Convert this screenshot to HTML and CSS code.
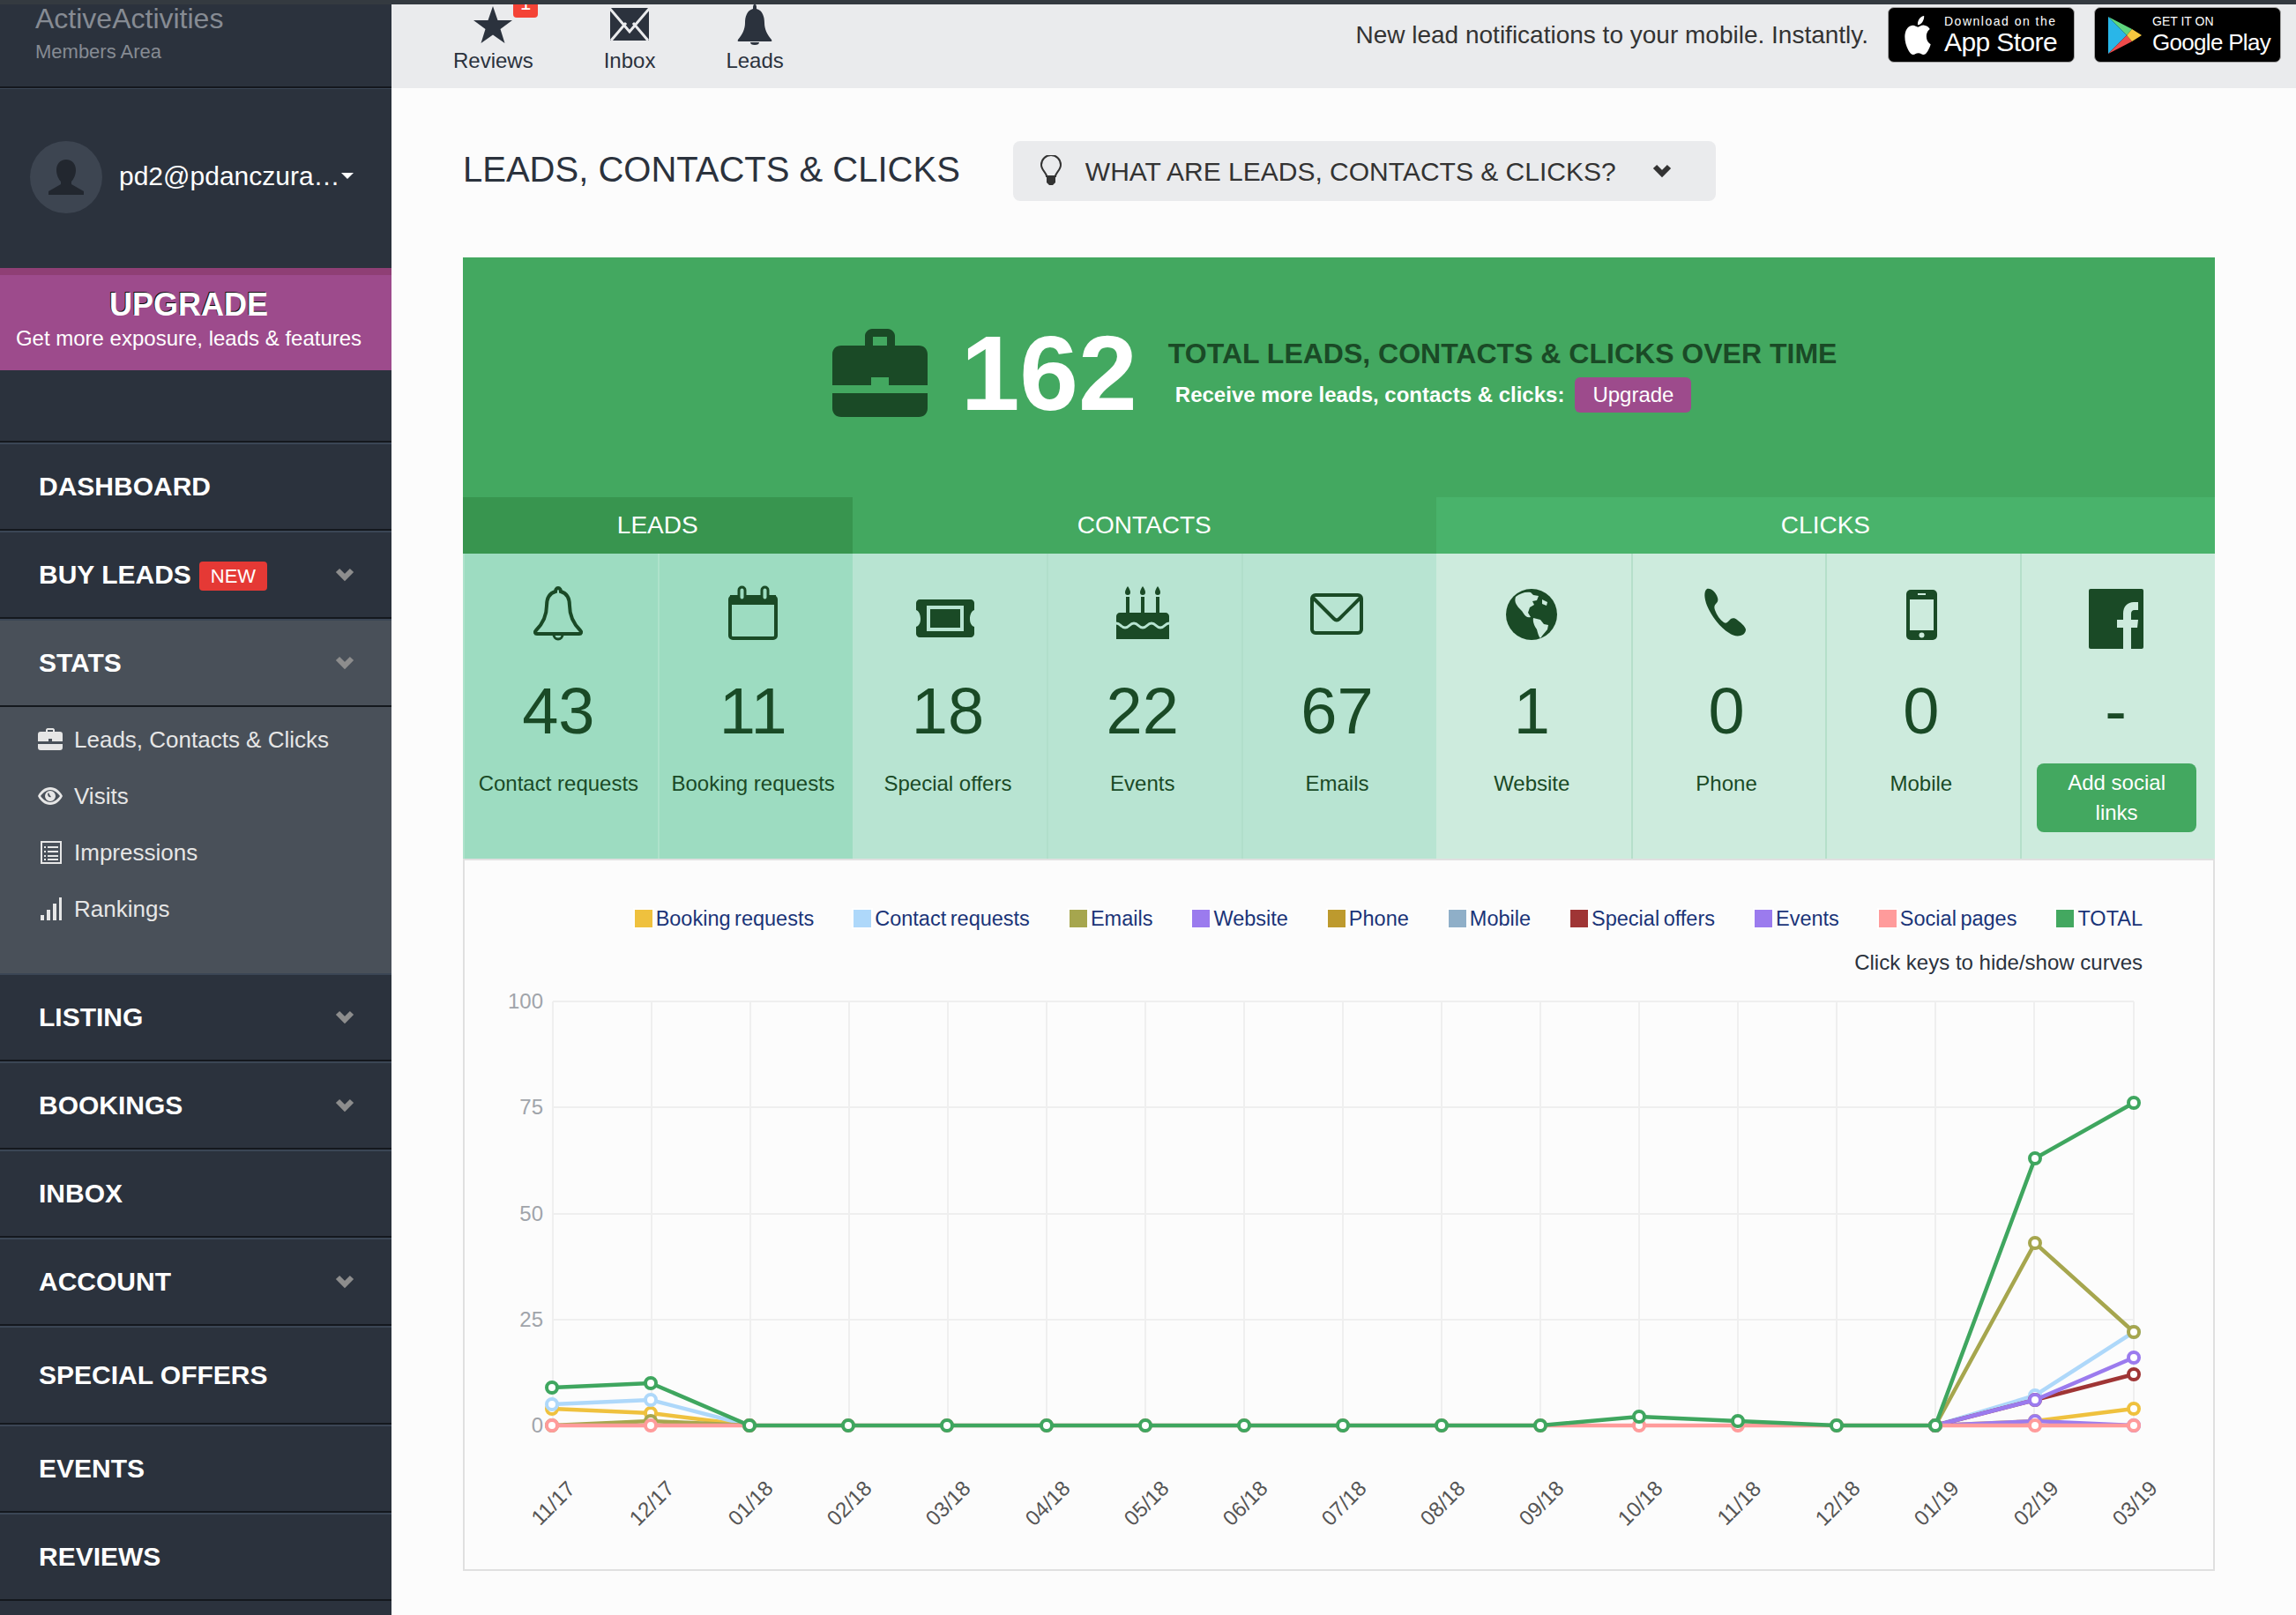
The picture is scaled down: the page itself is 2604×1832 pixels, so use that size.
FILE: index.html
```html
<!DOCTYPE html>
<html lang="en">
<head>
    <meta charset="UTF-8">
    <meta name="viewport" content="width=device-width, initial-scale=1.0">
    <title>Leads, Contacts &amp; Clicks</title>
    <link rel="stylesheet" href="styles.css">
</head>
<body>
    <div class="top-strip"></div>
    <div class="page">
        <aside class="sidebar">
            <div class="brand">
                <div class="brand-name">ActiveActivities</div>
                <div class="brand-sub">Members Area</div>
            </div>
            <div class="profile">
                <div class="avatar">
                    <svg width="40" height="40" viewBox="0 0 40 40"><path d="M20 0c7 0 11 5 11 12 0 6-3 11-5 13v3l14 8v4H0v-4l14-8v-3c-2-2-5-7-5-13C9 5 13 0 20 0z"/></svg>
                </div>
                <span class="profile-name">pd2@pdanczura…</span>
                <span class="caret"></span>
            </div>
            <div class="upgrade">
                <div class="upgrade-title">UPGRADE</div>
                <div class="upgrade-sub">Get more exposure, leads &amp; features</div>
            </div>
            <nav class="nav">
                <div class="nav-item">DASHBOARD</div>
                <div class="nav-item">
                    <span>BUY LEADS</span><span class="new-badge">NEW</span>
                    <svg class="chevron" width="22" height="16" viewBox="0 0 22 16"><path d="M3 3l8 8 8-8"/></svg>
                </div>
                <div class="nav-item nav-item-open">
                    <span>STATS</span>
                    <svg class="chevron" width="22" height="16" viewBox="0 0 22 16"><path d="M3 3l8 8 8-8"/></svg>
                </div>
                <div class="subnav">
                    <div class="subnav-item">
                        <svg width="28" height="28" viewBox="0 0 28 28"><path d="M9 5V3c0-1 1-2 2-2h6c1 0 2 1 2 2v2h6c2 0 3 1 3 3v8H16v-3h-4v3H0V8c0-2 1-3 3-3h6zm2 0h6V3h-6v2zM0 19h28v4c0 2-1 3-3 3H3c-2 0-3-1-3-3v-4z"/></svg>
                        <span>Leads, Contacts &amp; Clicks</span>
                    </div>
                    <div class="subnav-item">
                        <svg width="28" height="28" viewBox="0 0 28 28"><path fill-rule="evenodd" d="M14 4c6 0 11 4 14 10-3 6-8 10-14 10S3 20 0 14C3 8 8 4 14 4zm0 3c-4 0-8 3-11 7 3 4 7 7 11 7s8-3 11-7c-3-4-7-7-11-7zm0 1a6 6 0 1 1 0 12 6 6 0 0 1 0-12zm-2 2a3 3 0 0 0 3 5c-1-1-2-3-3-5z"/></svg>
                        <span>Visits</span>
                    </div>
                    <div class="subnav-item">
                        <svg width="28" height="28" viewBox="0 0 28 28"><path fill-rule="evenodd" d="M3 1h24v26H3V1zm2 2v22h20V3H5zm2 4h2v2H7V7zm4 0h12v2H11V7zM7 12h2v2H7v-2zm4 0h12v2H11v-2zM7 17h2v2H7v-2zm4 0h12v2H11v-2zM7 21h2v2H7v-2zm4 0h12v2H11v-2z"/></svg>
                        <span>Impressions</span>
                    </div>
                    <div class="subnav-item">
                        <svg width="28" height="28" viewBox="0 0 28 28"><path d="M3 21h4v6H3zM10 15h4v12h-4zM17 8h4v19h-4zM24 1h3v26h-3z"/></svg>
                        <span>Rankings</span>
                    </div>
                </div>
                <div class="nav-item">
                    <span>LISTING</span>
                    <svg class="chevron" width="22" height="16" viewBox="0 0 22 16"><path d="M3 3l8 8 8-8"/></svg>
                </div>
                <div class="nav-item">
                    <span>BOOKINGS</span>
                    <svg class="chevron" width="22" height="16" viewBox="0 0 22 16"><path d="M3 3l8 8 8-8"/></svg>
                </div>
                <div class="nav-item">INBOX</div>
                <div class="nav-item">
                    <span>ACCOUNT</span>
                    <svg class="chevron" width="22" height="16" viewBox="0 0 22 16"><path d="M3 3l8 8 8-8"/></svg>
                </div>
                <div class="nav-item nav-item-tall">SPECIAL OFFERS</div>
                <div class="nav-item">EVENTS</div>
                <div class="nav-item">REVIEWS</div>
            </nav>
        </aside>

        <main class="main">
            <header class="topbar">
                <div class="quick-link">
                    <svg width="46" height="46" viewBox="0 0 46 46"><path d="M23 2l5.500 16H45L31.500 28l5 16L23 34.500 9.500 44l5-16L1 18h16.500z"/></svg>
                    <span class="quick-label">Reviews</span>
                    <span class="count-badge">1</span>
                </div>
                <div class="quick-link">
                    <svg width="46" height="46" viewBox="0 0 46 46"><path d="M1 4h44v37H1z"/><path class="env-lines" d="M0 4l18 21 5 6 5-6L46 4M2 41l17-20M44 41L27 21"/></svg>
                    <span class="quick-label">Inbox</span>
                </div>
                <div class="quick-link">
                    <svg width="46" height="46" viewBox="0 0 46 46"><path d="M23 0c2 0 2 2 2 5 7 2 9 9 9 16 0 7 3 13 8 19 1 2 0 2-2 2H6c-2 0-3 0-2-2 5-6 8-12 8-19 0-7 2-14 9-16 0-3 0-5 2-5zM18 43h10a5 3 0 0 1-10 0z"/></svg>
                    <span class="quick-label">Leads</span>
                </div>
                <div class="app-links">
                    <span class="app-text">New lead notifications to your mobile. Instantly.</span>
                    <div class="store-badge">
                        <svg width="36" height="44" viewBox="0 0 24 24" preserveAspectRatio="none"><path fill="#fff" d="M12.152 6.896c-.948 0-2.415-1.078-3.960-1.040-2.040.027-3.910 1.183-4.961 3.014-2.117 3.675-.546 9.103 1.519 12.090 1.013 1.454 2.208 3.090 3.792 3.039 1.520-.065 2.090-.987 3.935-.987 1.831 0 2.350.987 3.960.948 1.637-.026 2.676-1.480 3.676-2.948 1.156-1.688 1.636-3.325 1.662-3.415-.039-.013-3.182-1.221-3.220-4.857-.026-3.040 2.480-4.494 2.597-4.559-1.429-2.090-3.623-2.324-4.390-2.376-2-.156-3.675 1.090-4.610 1.090zM15.530 3.830c.843-1.012 1.400-2.427 1.245-3.830-1.207.052-2.662.805-3.532 1.818-.780.896-1.454 2.338-1.273 3.714 1.338.104 2.715-.688 3.559-1.701"/></svg>
                        <div class="store-text">
                            <span class="store-small">Download on the</span>
                            <span class="store-big">App Store</span>
                        </div>
                    </div>
                    <div class="store-badge">
                        <svg width="38" height="42" viewBox="0 0 38 42"><path fill="#5fd67e" d="M0 0l21 21L27 14z"/><path fill="#29b6e8" d="M0 0v42l21-21z"/><path fill="#ee4b4b" d="M0 42l27-14-6-7z"/><path fill="#f6c83f" d="M27 14l11 7-11 7-6-7z"/></svg>
                        <div class="store-text">
                            <span class="store-small store-small-play">GET IT ON</span>
                            <span class="store-big store-big-play">Google Play</span>
                        </div>
                    </div>
                </div>
            </header>

            <div class="content">
                <div class="title-row">
                    <h1 class="page-title">LEADS, CONTACTS &amp; CLICKS</h1>
                    <div class="help-toggle">
                        <svg width="26" height="36" viewBox="0 0 26 36"><path class="bulb" d="M8 24c0-4-6-7-6-13a11 11 0 0 1 22 0c0 6-6 9-6 13z"/><path d="M8 25h10v6l-3 3h-4l-3-3z"/></svg>
                        <span class="help-text">WHAT ARE LEADS, CONTACTS &amp; CLICKS?</span>
                        <svg class="help-chevron" width="22" height="16" viewBox="0 0 22 16"><path d="M3 3l8 8 8-8"/></svg>
                    </div>
                </div>

                <section class="totals">
                    <svg class="totals-icon" width="108" height="100" viewBox="0 0 108 100"><path fill-rule="evenodd" d="M37 19V8c0-4 4-8 8-8h18c4 0 8 4 8 8v11h27c6 0 10 4 10 10v35H64V55H44v9H0V29c0-6 4-10 10-10h27zm9 0h16V9H46v10zM0 73h108v17c0 6-4 10-10 10H10c-6 0-10-4-10-10V73z"/></svg>
                    <div class="totals-number">162</div>
                    <div class="totals-text">
                        <div class="totals-title">TOTAL LEADS, CONTACTS &amp; CLICKS OVER TIME</div>
                        <div class="totals-line">
                            <span>Receive more leads, contacts &amp; clicks:</span>
                            <span class="upgrade-btn">Upgrade</span>
                        </div>
                    </div>
                </section>

                <section class="stats">
                    <div class="stats-head stats-head-leads">LEADS</div>
                    <div class="stats-head stats-head-contacts">CONTACTS</div>
                    <div class="stats-head stats-head-clicks">CLICKS</div>

                    <div class="stat stat-leads">
                        <svg class="stat-icon" viewBox="0 0 72 72"><path class="outline" d="M36 3c2 0 3 2 3 4 7 2 10 8 10 16 0 12 4 20 12 28 2 2 1 4-1 4H12c-2 0-3-2-1-4 8-8 12-16 12-28 0-8 3-14 10-16 0-2 1-4 3-4z"/><path class="outline-thin" d="M31 56a5 5 0 0 0 10 0"/></svg>
                        <div class="stat-value">43</div>
                        <div class="stat-label">Contact requests</div>
                    </div>
                    <div class="stat stat-leads">
                        <svg class="stat-icon" viewBox="0 0 72 72"><rect class="outline" x="10" y="13" width="52" height="47" rx="3"/><path d="M10 11h52v11H10z"/><rect class="ring" x="20" y="2" width="7" height="15" rx="3.500"/><rect class="ring" x="46" y="2" width="7" height="15" rx="3.500"/></svg>
                        <div class="stat-value">11</div>
                        <div class="stat-label">Booking requests</div>
                    </div>
                    <div class="stat stat-contacts">
                        <svg class="stat-icon" viewBox="0 0 72 72"><path d="M4 16h58c2 0 4 2 4 4v8c-3 1-5 5-5 10s2 8 5 9v8c0 2-2 4-4 4H4c-2 0-4-2-4-4v-8c3-1 5-4 5-9s-2-9-5-10v-8c0-2 2-4 4-4z"/><path class="cut" d="M12 23h42v29H12z"/><path d="M16 27h34v21H16z"/></svg>
                        <div class="stat-value">18</div>
                        <div class="stat-label">Special offers</div>
                    </div>
                    <div class="stat stat-contacts">
                        <svg class="stat-icon" viewBox="0 0 72 72"><path d="M19 1c2 3 3 5 3 7s-1 3-3 3-3-1-3-3 1-4 3-7zM36 1c2 3 3 5 3 7s-1 3-3 3-3-1-3-3 1-4 3-7zM53 1c2 3 3 5 3 7s-1 3-3 3-3-1-3-3 1-4 3-7zM17 13h4v18h-4zM34 13h4v18h-4zM51 13h4v18h-4zM10 31h52c2 0 4 2 4 4v26H6V35c0-2 2-4 4-4z"/><path class="cake-wave" d="M6 43c5 0 5 5 10 5s5-5 10-5 5 5 10 5 5-5 10-5 5 5 10 5 5-5 10-5"/></svg>
                        <div class="stat-value">22</div>
                        <div class="stat-label">Events</div>
                    </div>
                    <div class="stat stat-contacts">
                        <svg class="stat-icon" viewBox="0 0 72 72"><rect class="outline" x="8" y="11" width="56" height="43" rx="4"/><path class="outline" d="M9 14l24 24c2 2 4 2 6 0l24-24"/></svg>
                        <div class="stat-value">67</div>
                        <div class="stat-label">Emails</div>
                    </div>
                    <div class="stat stat-clicks">
                        <svg class="stat-icon" viewBox="0 0 72 72"><circle cx="36" cy="33" r="29"/><path class="land" d="M18 13c5-4 11-6 17-5l3 3 6 1-2 5-5 1 2 4-5 3-2 6 3 5c-4 1-6-1-8-4-2-4-6-6-8-10-2-3-2-6-1-9zM38 37l8 2 4 5 5 1-1 5-5 6-3 4c-2-2-3-6-4-10-2-3-5-8-4-13zM48 16l6 3-1 4-5-2z"/></svg>
                        <div class="stat-value">1</div>
                        <div class="stat-label">Website</div>
                    </div>
                    <div class="stat stat-clicks">
                        <svg class="stat-icon" viewBox="0 0 72 72"><path d="M14 4c5-1 10 4 12 10 1 3 0 5-2 7-2 2-2 4-1 7 2 6 6 11 10 14 2 1 3 1 5-1l3-3c2-1 5-1 7 1 4 3 9 7 10 11 0 3-2 6-6 7-4 1-9 0-13-3-10-6-20-19-25-31C11 15 10 7 14 4z"/></svg>
                        <div class="stat-value">0</div>
                        <div class="stat-label">Phone</div>
                    </div>
                    <div class="stat stat-clicks">
                        <svg class="stat-icon" viewBox="0 0 72 72"><rect x="19" y="5" width="35" height="57" rx="5"/><rect class="cut" x="23" y="16" width="27" height="35"/><circle class="cut" cx="36.500" cy="56.500" r="3"/><path class="cut" d="M32 9h9v2h-9z"/></svg>
                        <div class="stat-value">0</div>
                        <div class="stat-label">Mobile</div>
                    </div>
                    <div class="stat stat-clicks">
                        <svg class="stat-icon" viewBox="0 0 72 72"><rect x="5" y="4" width="62" height="68" rx="2"/><path class="cut" d="M44 72V48h-7v-9h7v-7c0-8 5-13 12-13h5v9h-4c-3 0-4 2-4 4v7h8l-1 9h-7v24z"/></svg>
                        <div class="stat-value">-</div>
                        <div class="stat-button">Add social links</div>
                    </div>
                </section>

                <section class="chart-panel">
                    <div class="legend">
                        <span class="legend-item"><i class="key key-booking"></i>Booking requests</span>
                        <span class="legend-item"><i class="key key-contact"></i>Contact requests</span>
                        <span class="legend-item"><i class="key key-emails"></i>Emails</span>
                        <span class="legend-item"><i class="key key-website"></i>Website</span>
                        <span class="legend-item"><i class="key key-phone"></i>Phone</span>
                        <span class="legend-item"><i class="key key-mobile"></i>Mobile</span>
                        <span class="legend-item"><i class="key key-special"></i>Special offers</span>
                        <span class="legend-item"><i class="key key-website"></i>Events</span>
                        <span class="legend-item"><i class="key key-social"></i>Social pages</span>
                        <span class="legend-item"><i class="key key-total"></i>TOTAL</span>
                    </div>
                    <div class="legend-note">Click keys to hide/show curves</div>

                    <!-- viewBox uses the same numbers as the page so the plot is easy to read off -->
                    <svg class="chart" width="1983" height="664" viewBox="527 1116 1983 664">
                        <defs>
                            <marker id="dot-booking" markerWidth="18" markerHeight="18" refX="9" refY="9" markerUnits="userSpaceOnUse"><circle cx="9" cy="9" r="6" fill="#fff" stroke="#efc13e" stroke-width="4"/></marker>
                            <marker id="dot-contact" markerWidth="18" markerHeight="18" refX="9" refY="9" markerUnits="userSpaceOnUse"><circle cx="9" cy="9" r="6" fill="#fff" stroke="#aed8fa" stroke-width="4"/></marker>
                            <marker id="dot-emails" markerWidth="18" markerHeight="18" refX="9" refY="9" markerUnits="userSpaceOnUse"><circle cx="9" cy="9" r="6" fill="#fff" stroke="#a6a64e" stroke-width="4"/></marker>
                            <marker id="dot-purple" markerWidth="18" markerHeight="18" refX="9" refY="9" markerUnits="userSpaceOnUse"><circle cx="9" cy="9" r="6" fill="#fff" stroke="#9b7bee" stroke-width="4"/></marker>
                            <marker id="dot-special" markerWidth="18" markerHeight="18" refX="9" refY="9" markerUnits="userSpaceOnUse"><circle cx="9" cy="9" r="6" fill="#fff" stroke="#9f3535" stroke-width="4"/></marker>
                            <marker id="dot-social" markerWidth="18" markerHeight="18" refX="9" refY="9" markerUnits="userSpaceOnUse"><circle cx="9" cy="9" r="6" fill="#fff" stroke="#ff9b9b" stroke-width="4"/></marker>
                            <marker id="dot-total" markerWidth="18" markerHeight="18" refX="9" refY="9" markerUnits="userSpaceOnUse"><circle cx="9" cy="9" r="6" fill="#fff" stroke="#3fa65f" stroke-width="4"/></marker>
                        </defs>

                        <path class="grid" d="M627 1137H2420M627 1257H2420M627 1378H2420M627 1498H2420M627 1618H2420"/>
                        <path class="grid" d="M627 1137V1618M739 1137V1618M851 1137V1618M963 1137V1618M1075 1137V1618M1187 1137V1618M1299 1137V1618M1411 1137V1618M1523 1137V1618M1635 1137V1618M1747 1137V1618M1859 1137V1618M1971 1137V1618M2083 1137V1618M2195 1137V1618M2307 1137V1618M2420 1137V1618"/>

                        <g class="y-labels">
                            <text x="616" y="1145">100</text>
                            <text x="616" y="1265">75</text>
                            <text x="616" y="1386">50</text>
                            <text x="616" y="1506">25</text>
                            <text x="616" y="1626">0</text>
                        </g>
                        <g class="x-labels" transform="translate(7 2)">
                            <text transform="translate(626 1710) rotate(-45)">11/17</text>
                            <text transform="translate(738 1710) rotate(-45)">12/17</text>
                            <text transform="translate(850 1710) rotate(-45)">01/18</text>
                            <text transform="translate(962 1710) rotate(-45)">02/18</text>
                            <text transform="translate(1074 1710) rotate(-45)">03/18</text>
                            <text transform="translate(1187 1710) rotate(-45)">04/18</text>
                            <text transform="translate(1299 1710) rotate(-45)">05/18</text>
                            <text transform="translate(1411 1710) rotate(-45)">06/18</text>
                            <text transform="translate(1523 1710) rotate(-45)">07/18</text>
                            <text transform="translate(1635 1710) rotate(-45)">08/18</text>
                            <text transform="translate(1747 1710) rotate(-45)">09/18</text>
                            <text transform="translate(1859 1710) rotate(-45)">10/18</text>
                            <text transform="translate(1971 1710) rotate(-45)">11/18</text>
                            <text transform="translate(2083 1710) rotate(-45)">12/18</text>
                            <text transform="translate(2195 1710) rotate(-45)">01/19</text>
                            <text transform="translate(2308 1710) rotate(-45)">02/19</text>
                            <text transform="translate(2420 1710) rotate(-45)">03/19</text>
                        </g>

                        <g class="line line-booking" marker-start="url(#dot-booking)" marker-mid="url(#dot-booking)" marker-end="url(#dot-booking)">
                            <polyline points="626,1599 738,1604 850,1618"/>
                            <polyline points="2195,1618 2308,1613 2420,1599"/>
                        </g>
                        <g class="line line-contact" marker-start="url(#dot-contact)" marker-mid="url(#dot-contact)" marker-end="url(#dot-contact)">
                            <polyline points="626,1594 738,1589 850,1618"/>
                            <polyline points="2195,1618 2308,1584 2420,1512"/>
                        </g>
                        <g class="line line-emails" marker-start="url(#dot-emails)" marker-mid="url(#dot-emails)" marker-end="url(#dot-emails)">
                            <polyline points="626,1618 738,1613 850,1618"/>
                            <polyline points="2195,1618 2308,1411 2420,1512"/>
                        </g>
                        <g class="line line-purple" marker-start="url(#dot-purple)" marker-mid="url(#dot-purple)" marker-end="url(#dot-purple)">
                            <polyline points="2195,1618 2308,1613 2420,1618"/>
                        </g>
                        <g class="line line-special" marker-start="url(#dot-special)" marker-mid="url(#dot-special)" marker-end="url(#dot-special)">
                            <polyline points="2195,1618 2308,1589 2420,1560"/>
                        </g>
                        <g class="line line-purple" marker-start="url(#dot-purple)" marker-mid="url(#dot-purple)" marker-end="url(#dot-purple)">
                            <polyline points="2195,1618 2308,1589 2420,1541"/>
                        </g>
                        <g class="line line-social" marker-start="url(#dot-social)" marker-mid="url(#dot-social)" marker-end="url(#dot-social)">
                            <polyline points="626,1618 738,1618 850,1618 962,1618 1074,1618 1187,1618 1299,1618 1411,1618 1523,1618 1635,1618 1747,1618 1859,1618 1971,1618 2083,1618 2195,1618 2308,1618 2420,1618"/>
                        </g>
                        <g class="line line-total" marker-start="url(#dot-total)" marker-mid="url(#dot-total)" marker-end="url(#dot-total)">
                            <polyline points="626,1575 738,1570 850,1618 962,1618 1074,1618 1187,1618 1299,1618 1411,1618 1523,1618 1635,1618 1747,1618 1859,1608 1971,1613 2083,1618 2195,1618 2308,1315 2420,1252"/>
                        </g>
                    </svg>
                </section>
            </div>
        </main>
    </div>
</body>
</html>
```

FILE: styles.css
```css
html, body {
    margin: 0;
    padding: 0;
    height: 1832px;
    overflow: hidden;
}

body {
    font-family: "Liberation Sans", Arial, sans-serif;
    background-color: #fcfcfc;
    color: #2b323d;
}

.top-strip {
    height: 5px;
    background-color: #343a40;
}

.page {
    display: flex;
    height: 1827px;
}

/* sidebar */
.sidebar {
    width: 444px;
    flex-shrink: 0;
    background-color: #2b323d;
}

.brand {
    height: 95px;
    box-sizing: border-box;
    padding-left: 40px;
    border-bottom: 2px solid #14181e;
    box-shadow: 0 1px 0 #3b4655;
    color: #868b93;
}

.brand-name {
    font-size: 32px;
    line-height: 32px;
}

.brand-sub {
    font-size: 22px;
    line-height: 26px;
    margin-top: 9px;
}

.profile {
    height: 204px;
    box-sizing: border-box;
    padding: 60px 0 0 34px;
    display: flex;
    align-items: flex-start;
}

.avatar {
    width: 82px;
    height: 82px;
    border-radius: 50%;
    background-color: #3d4551;
    display: flex;
    align-items: center;
    justify-content: center;
    flex-shrink: 0;
}

.avatar svg {
    fill: #22272f;
}

.profile-name {
    margin-left: 19px;
    margin-top: 22px;
    font-size: 30px;
    line-height: 36px;
    color: #fff;
    white-space: nowrap;
}

.caret {
    margin-top: 36px;
    margin-left: 1px;
    border-left: 7px solid transparent;
    border-right: 7px solid transparent;
    border-top: 7px solid #fff;
}

.upgrade {
    height: 116px;
    box-sizing: border-box;
    background-color: #9d4b8c;
    border-top: 8px solid #8f3f75;
    text-align: center;
    color: #fff;
    padding: 12px 16px 0 0;
}

.upgrade-title {
    font-size: 36px;
    line-height: 44px;
    font-weight: bold;
    text-shadow: -1px -1px 0 #111;
}

.upgrade-sub {
    font-size: 24px;
    line-height: 32px;
}

.nav {
    margin-top: 80px;
    border-top: 2px solid #14181e;
}

.nav-item {
    height: 100px;
    box-sizing: border-box;
    border-top: 2px solid #3b4655;
    border-bottom: 2px solid #14181e;
    padding: 0 42px 0 44px;
    display: flex;
    align-items: center;
    font-size: 30px;
    font-weight: bold;
    color: #fff;
}

.nav-item-tall {
    height: 112px;
}

.nav-item-open {
    background-color: #495059;
}

.chevron {
    margin-left: auto;
    fill: none;
    stroke: #8d8d8d;
    stroke-width: 6;
}

.new-badge {
    margin-left: 9px;
    margin-top: 2px;
    padding: 0 13px;
    background-color: #e53935;
    border-radius: 4px;
    font-size: 22px;
    line-height: 33px;
    font-weight: normal;
}

.subnav {
    height: 302px;
    box-sizing: border-box;
    padding: 5px 0 0 43px;
    background-color: #495059;
    color: #e6e6e6;
}

.subnav-item {
    height: 64px;
    display: flex;
    align-items: center;
    gap: 13px;
    font-size: 26px;
}

.subnav-item svg {
    fill: #e6e6e6;
}

/* top bar */
.main {
    flex: 1;
    min-width: 0;
}

.topbar {
    height: 95px;
    background-color: #eaebed;
    padding-left: 70px;
    display: flex;
    align-items: flex-start;
    gap: 80px;
    overflow: hidden;
}

.quick-link {
    position: relative;
    display: flex;
    flex-direction: column;
    align-items: center;
}

.quick-link svg {
    fill: #2b323d;
    display: block;
}

.quick-link .env-lines {
    fill: none;
    stroke: #eaebed;
    stroke-width: 3;
}

.quick-label {
    font-size: 24px;
    line-height: 34px;
    margin-top: 1px;
}

.count-badge {
    position: absolute;
    left: 68px;
    top: -16px;
    width: 28px;
    height: 31px;
    background-color: #f44336;
    border-radius: 4px;
    color: #fff;
    font-size: 22px;
    line-height: 30px;
    text-align: center;
}

.app-links {
    margin-left: auto;
    padding: 3px 17px 0 0;
    display: flex;
    align-items: center;
    gap: 22px;
}

.app-text {
    font-size: 28px;
    color: #333;
}

.store-badge {
    width: 212px;
    height: 63px;
    box-sizing: border-box;
    background-color: #000;
    border: 1px solid #a6a6a6;
    border-radius: 7px;
    color: #fff;
    display: flex;
    align-items: center;
    padding-left: 15px;
    gap: 12px;
}

.store-text {
    display: flex;
    flex-direction: column;
}

.store-small {
    font-size: 14px;
    line-height: 16px;
    letter-spacing: 1.500px;
}

.store-big {
    font-size: 30px;
    line-height: 32px;
    letter-spacing: -0.600px;
    white-space: nowrap;
}

.store-small-play {
    letter-spacing: 0;
}

.store-big-play {
    font-size: 26px;
    letter-spacing: -0.700px;
}

/* content */
.content {
    padding: 60px 92px 0 81px;
}

.title-row {
    display: flex;
    align-items: center;
    gap: 60px;
}

.page-title {
    margin: 0 0 4px;
    font-size: 40px;
    font-weight: normal;
    color: #2b323d;
}

.help-toggle {
    width: 797px;
    height: 68px;
    box-sizing: border-box;
    padding: 0 50px 0 30px;
    background-color: #eaebed;
    border-radius: 8px;
    display: flex;
    align-items: center;
    color: #333;
}

.help-toggle svg {
    fill: #333;
}

.help-toggle .bulb {
    fill: none;
    stroke: #333;
    stroke-width: 2;
}

.help-text {
    margin: 2px 0 0 26px;
    font-size: 30px;
}

.help-chevron {
    margin-left: auto;
}

.help-toggle .help-chevron {
    fill: none;
    stroke: #333;
    stroke-width: 6;
}

.totals {
    margin-top: 64px;
    height: 272px;
    box-sizing: border-box;
    padding: 0 10px 10px 0;
    background-color: #43a860;
    display: flex;
    align-items: center;
    justify-content: center;
}

.totals-icon {
    fill: #1a4a26;
}

.totals-number {
    margin-left: 38px;
    font-size: 120px;
    line-height: 120px;
    font-weight: bold;
    color: #fff;
}

.totals-text {
    margin-left: 35px;
    padding-top: 4px;
}

.totals-title {
    font-size: 32px;
    font-weight: bold;
    color: #1a4a26;
}

.totals-line {
    margin-top: 8px;
    padding-left: 8px;
    display: flex;
    align-items: center;
    font-size: 24px;
    font-weight: bold;
    color: #fff;
}

.upgrade-btn {
    margin-left: 12px;
    padding: 0 20px;
    background-color: #9d4b8c;
    border-radius: 6px;
    font-weight: normal;
    line-height: 40px;
}

.stats {
    display: grid;
    grid-template-columns: repeat(9, 1fr);
    grid-template-rows: 64px 346px;
    color: #1a4a26;
}

.stats-head {
    color: #fff;
    font-size: 28px;
    display: flex;
    align-items: center;
    justify-content: center;
}

.stats-head-leads {
    grid-column: span 2;
    background-color: #38954f;
}

.stats-head-contacts {
    grid-column: span 3;
    background-color: #43a860;
}

.stats-head-clicks {
    grid-column: span 4;
    background-color: #49b36b;
}

.stat {
    box-sizing: border-box;
    padding: 36px 6px 0 0;
    text-align: center;
    border-left: 2px solid transparent;
}

.stat-leads {
    background-color: #9ddcc1;
    border-left-color: #aee2cb;
}

.stat-contacts {
    background-color: #b8e4d2;
    border-left-color: #b1dfcb;
}

.stat-clicks {
    background-color: #cdebdd;
    border-left-color: #b5dfca;
}

.stat-leads:first-of-type,
.stat-leads + .stat-contacts,
.stat-contacts + .stat-clicks {
    border-left-color: transparent;
}

.stat-icon {
    display: block;
    width: 72px;
    height: 72px;
    margin: 0 auto;
    fill: #1a4a26;
    overflow: visible;
}

.stat-icon .outline {
    fill: none;
    stroke: #1a4a26;
    stroke-width: 4;
}

.stat-icon .outline-thin {
    fill: none;
    stroke: #1a4a26;
    stroke-width: 3;
}

.stat-icon .ring {
    fill: #9ddcc1;
    stroke: #1a4a26;
    stroke-width: 3;
}

.stat-contacts .cut,
.stat-contacts .cake-wave {
    fill: #b8e4d2;
}

.stat-contacts .cake-wave {
    fill: none;
    stroke: #b8e4d2;
    stroke-width: 3;
}

.stat-clicks .cut,
.stat-clicks .land {
    fill: #cdebdd;
}

.stat-value {
    margin-top: 34px;
    font-size: 74px;
    line-height: 74px;
}

.stat-label {
    margin-top: 28px;
    font-size: 24px;
    line-height: 34px;
}

.stat-button {
    margin: 22px 15px 0 17px;
    padding: 5px 10px;
    background-color: #43a860;
    border-radius: 8px;
    color: #fff;
    font-size: 24px;
    line-height: 34px;
}

/* chart */
.chart-panel {
    height: 808px;
    box-sizing: border-box;
    border: 2px solid #e0e0e0;
    padding-top: 52px;
}

.legend {
    display: flex;
    justify-content: flex-end;
    gap: 45px;
    padding-right: 80px;
    font-size: 23.500px;
    line-height: 28px;
    word-spacing: -2px;
    color: #1a3478;
}

.legend-item {
    display: flex;
    align-items: center;
    gap: 4px;
}

.key {
    width: 20px;
    height: 20px;
    outline: 2px solid #fff;
}

.key-booking { background-color: #efc13e; }
.key-contact { background-color: #aed8fa; }
.key-emails { background-color: #a6a64e; }
.key-website { background-color: #9b7bee; }
.key-phone { background-color: #bd9a2e; }
.key-mobile { background-color: #8fafc8; }
.key-special { background-color: #9f3535; }
.key-social { background-color: #ff9b9b; }
.key-total { background-color: #43a860; }

.legend-note {
    margin-top: 22px;
    padding-right: 80px;
    text-align: right;
    font-size: 24px;
    line-height: 28px;
    color: #2b323d;
}

.chart {
    display: block;
    margin-top: 9px;
}

.grid {
    fill: none;
    stroke: #efefef;
    stroke-width: 2;
}

.y-labels text {
    font-size: 24px;
    text-anchor: end;
    fill: #a0a4aa;
}

.x-labels text {
    font-size: 24px;
    text-anchor: middle;
    fill: #555;
}

.line polyline {
    fill: none;
    stroke-width: 4.500;
}

.line-booking polyline { stroke: #efc13e; }
.line-contact polyline { stroke: #aed8fa; }
.line-emails polyline { stroke: #a6a64e; }
.line-purple polyline { stroke: #9b7bee; }
.line-special polyline { stroke: #9f3535; }
.line-social polyline { stroke: #ff9b9b; }
.line-total polyline { stroke: #3fa65f; }
```
